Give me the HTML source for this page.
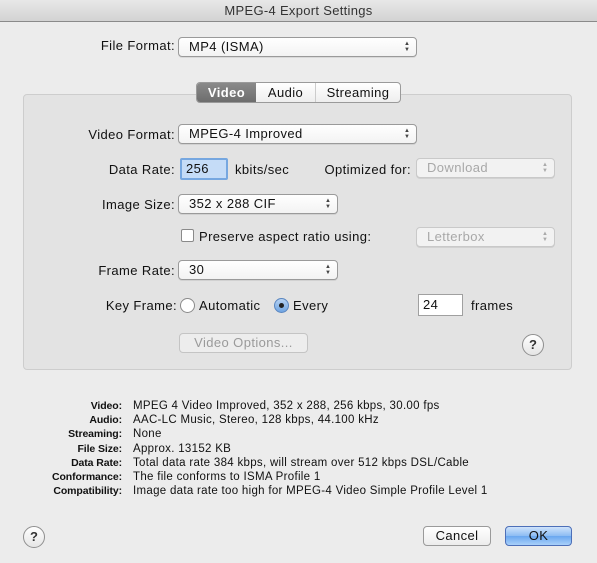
<!DOCTYPE html>
<html><head><meta charset="utf-8"><style>
*{box-sizing:border-box;margin:0;padding:0}
body{width:597px;height:563px;background:#ececec;font-family:"Liberation Sans",sans-serif;font-size:13px;letter-spacing:0.4px;color:#111;position:relative;overflow:hidden}
.a{position:absolute;white-space:nowrap}
.r{text-align:right}
.title{left:0;top:0;width:597px;height:22px;background:linear-gradient(#e8e8e8,#d3d3d3);border-bottom:1px solid #8a8a8a;text-align:center;line-height:22px;font-size:13px;color:#333;letter-spacing:0.3px}
.pop{position:absolute;background:linear-gradient(#fff,#f3f3f3);border:1px solid #9a9a9a;border-radius:4px;padding-left:10px;line-height:18px;box-shadow:0 1px 0 rgba(0,0,0,.08)}
.pop.dis{color:#a8a8a8;border-color:#c9c9c9;background:#f2f2f2}
.arr{position:absolute;right:6px;top:3px;font-size:6px;line-height:6px;color:#444;letter-spacing:0}
.dis .arr{color:#aaa}
.box{left:23px;top:94px;width:549px;height:276px;background:#e3e3e3;border:1px solid #cdcdcd;border-radius:4px}
.tabs{left:196px;top:82px;height:21px;width:205px;border:1px solid #9a9a9a;border-radius:4px;background:linear-gradient(#fff,#eee);display:flex;overflow:hidden;font-size:13px;line-height:19px}
.tabs div{text-align:center}
.field{position:absolute;background:#fff;border:1px solid #a0a0a0;padding-left:4px;line-height:19px}
.btn{position:absolute;border:1px solid #9a9a9a;border-radius:4px;background:linear-gradient(#fff,#ececec);text-align:center;line-height:18px;font-size:13px}
.help{position:absolute;width:22px;height:22px;border-radius:50%;border:1px solid #8f8f8f;background:linear-gradient(#fff,#e5e5e5);text-align:center;line-height:20px;font-size:13px;font-weight:bold;color:#333;letter-spacing:0}
.info{font-size:11.5px;line-height:14.2px;letter-spacing:0.3px}
</style></head><body>
<div class="a title">MPEG-4 Export Settings</div>

<div class="a r" style="right:422px;top:38px">File Format:</div>
<div class="pop" style="left:178px;top:37px;width:239px;height:20px">MP4 (ISMA)<span class="arr">▲<br>▼</span></div>

<div class="a box"></div>
<div class="a tabs">
<div style="width:59px;background:linear-gradient(#8a8a8a,#6d6d6d);color:#fff;font-weight:bold">Video</div>
<div style="width:60px;border-right:1px solid #ccc">Audio</div>
<div style="flex:1">Streaming</div>
</div>

<div class="a r" style="right:422px;top:127px">Video Format:</div>
<div class="pop" style="left:178px;top:124px;width:239px;height:20px">MPEG-4 Improved<span class="arr">▲<br>▼</span></div>

<div class="a r" style="right:422px;top:162px">Data Rate:</div>
<div class="field" style="left:180px;top:158px;width:48px;height:22px;background:#c5dcf7;border:2px solid #76a7e0;border-radius:2px;line-height:17px;font-size:13px">256</div>
<div class="a" style="left:235px;top:162px">kbits/sec</div>
<div class="a r" style="right:186px;top:162px">Optimized for:</div>
<div class="pop dis" style="left:416px;top:158px;width:139px;height:20px">Download<span class="arr">▲<br>▼</span></div>

<div class="a r" style="right:422px;top:197px">Image Size:</div>
<div class="pop" style="left:178px;top:194px;width:160px;height:20px">352 x 288 CIF<span class="arr">▲<br>▼</span></div>

<div class="a" style="left:181px;top:229px;width:13px;height:13px;border:1px solid #8a8a8a;border-radius:2px;background:#fff"></div>
<div class="a" style="left:199px;top:229px">Preserve aspect ratio using:</div>
<div class="pop dis" style="left:416px;top:227px;width:139px;height:20px">Letterbox<span class="arr">▲<br>▼</span></div>

<div class="a r" style="right:422px;top:263px">Frame Rate:</div>
<div class="pop" style="left:178px;top:260px;width:160px;height:20px">30<span class="arr">▲<br>▼</span></div>

<div class="a r" style="right:420px;top:298px">Key Frame:</div>
<div class="a" style="left:180px;top:298px;width:15px;height:15px;border:1px solid #8a8a8a;border-radius:50%;background:#fff"></div>
<div class="a" style="left:199px;top:298px">Automatic</div>
<div class="a" style="left:274px;top:298px;width:15px;height:15px;border:1px solid #5a86c0;border-radius:50%;background:linear-gradient(#b8d3f2,#6fa4e2)"><div style="position:absolute;left:4px;top:4px;width:5px;height:5px;border-radius:50%;background:#222"></div></div>
<div class="a" style="left:293px;top:298px">Every</div>
<div class="field" style="left:418px;top:294px;width:45px;height:22px">24</div>
<div class="a" style="left:471px;top:298px">frames</div>

<div class="btn" style="left:179px;top:333px;width:129px;height:20px;color:#9a9a9a;border-color:#c4c4c4;background:#ededed">Video Options...</div>
<div class="help" style="left:522px;top:334px">?</div>

<div class="a r info" style="right:475px;top:399px;font-weight:bold;font-size:10.5px;letter-spacing:-0.1px">Video:<br>Audio:<br>Streaming:<br>File Size:<br>Data Rate:<br>Conformance:<br>Compatibility:</div>
<div class="a info" style="left:133px;top:399px">MPEG 4 Video Improved, 352 x 288, 256 kbps, 30.00 fps<br>AAC-LC Music, Stereo, 128 kbps, 44.100 kHz<br>None<br>Approx. 13152 KB<br>Total data rate 384 kbps, will stream over 512 kbps DSL/Cable<br>The file conforms to ISMA Profile 1<br>Image data rate too high for MPEG-4 Video Simple Profile Level 1</div>

<div class="help" style="left:23px;top:526px">?</div>
<div class="btn" style="left:423px;top:526px;width:68px;height:20px">Cancel</div>
<div class="btn" style="left:505px;top:526px;width:67px;height:20px;border-color:#4d6fb8;background:linear-gradient(#cfe3fb,#8cbcf3 50%,#6aa7ef 51%,#a9d0fa)">OK</div>
</body></html>
